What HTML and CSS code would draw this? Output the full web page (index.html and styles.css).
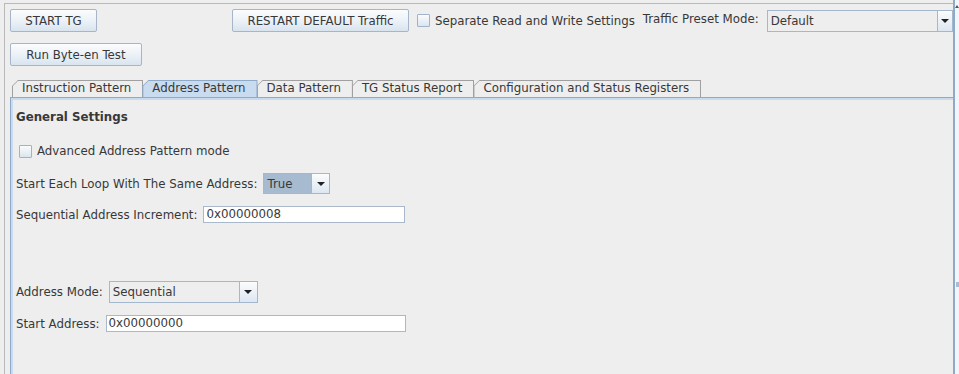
FILE: index.html
```html
<!DOCTYPE html>
<html lang="en">
<head>
  <meta charset="UTF-8">
  <meta name="viewport" content="width=device-width, initial-scale=1.0">
  <title>Traffic Generator</title>
  <link rel="stylesheet" href="styles.css">
</head>
<body>
  <div class="split">
    <div class="panel">
      <div class="row row-top">
        <button class="btn btn-start">START TG</button>
        <button class="btn btn-restart">RESTART DEFAULT Traffic</button>
        <label class="check check-top"><span class="box"></span>Separate Read and Write Settings</label>
        <span class="preset-label">Traffic Preset Mode:</span>
        <div class="combo combo-preset">
          <span class="combo-text">Default</span>
          <span class="combo-arrow"></span>
        </div>
      </div>

      <div class="row row-second">
        <button class="btn btn-byte">Run Byte-en Test</button>
      </div>

      <div class="tabs">
        <div class="tab"><span>Instruction Pattern</span></div>
        <div class="tab selected"><span>Address Pattern</span></div>
        <div class="tab"><span>Data Pattern</span></div>
        <div class="tab"><span>TG Status Report</span></div>
        <div class="tab"><span>Configuration and Status Registers</span></div>
      </div>

      <div class="tab-pane">
        <div class="section-title">General Settings</div>

        <label class="check check-adv"><span class="box"></span>Advanced Address Pattern mode</label>

        <div class="field-row row-loop">
          <span class="field-label">Start Each Loop With The Same Address:</span>
          <div class="combo combo-true">
            <span class="combo-text">True</span>
            <span class="combo-arrow"></span>
          </div>
        </div>

        <div class="field-row row-inc">
          <span class="field-label">Sequential Address Increment:</span>
          <div class="textfield tf-inc">0x00000008</div>
        </div>

        <div class="field-row row-mode">
          <span class="field-label">Address Mode:</span>
          <div class="combo combo-mode">
            <span class="combo-text">Sequential</span>
            <span class="combo-arrow"></span>
          </div>
        </div>

        <div class="field-row row-start">
          <span class="field-label">Start Address:</span>
          <div class="textfield tf-start">0x00000000</div>
        </div>
      </div>
    </div>

    <div class="divider">
      <span class="divider-up"></span>
      <span class="divider-grip"></span>
    </div>
  </div>
</body>
</html>
```

FILE: styles.css
```css
body {
  margin: 0;
  background: #eeeeee;
  font-family: "DejaVu Sans", sans-serif;
  font-size: 11.8px;
  color: #383838;
  overflow: hidden;
}

.split {
  display: flex;
  height: 374px;
}

.panel {
  width: 943px;
  flex-shrink: 0;
  margin: 3px 0 0 4px;
  padding: 5px 0 0 5px;
  border-top: 1px solid #b9b9b9;
  border-left: 1px solid #b9b9b9;
  display: flex;
  flex-direction: column;
}

.row {
  display: flex;
  align-items: center;
}

.row-second {
  margin-top: 11px;
}

/* buttons */
.btn {
  height: 23px;
  padding: 0;
  font-family: "DejaVu Sans", sans-serif;
  font-size: 11.8px;
  color: #383838;
  border: 1px solid #a7b6c6;
  border-radius: 2px;
  background: linear-gradient(#fbfcfd, #eef3f8 45%, #d9e4ef);
}

.btn-start {
  width: 87px;
}

.btn-restart {
  width: 177px;
  margin-left: 135px;
}

.btn-byte {
  width: 132px;
}

/* checkbox */
.check {
  display: flex;
  align-items: center;
  white-space: nowrap;
}

.box {
  width: 11px;
  height: 11px;
  margin-right: 5px;
  border: 1px solid #9fb3c9;
  border-radius: 1px;
  background: linear-gradient(#fafcfd, #dbe5ef);
}

.check-top {
  margin-left: 8px;
}

.preset-label {
  margin-left: 8px;
  align-self: flex-start;
  margin-top: 3px;
  white-space: nowrap;
}

/* combo boxes */
.combo {
  display: flex;
  border: 1px solid #a3b8cc;
  background: #eeeeee;
}

.combo-text {
  flex: 1;
  padding-left: 3px;
  display: flex;
  align-items: center;
}

.combo-arrow {
  width: 17px;
  border-left: 1px solid #a3b8cc;
  background: linear-gradient(#fbfcfd, #dde7f1);
  display: flex;
  align-items: center;
  justify-content: center;
}

.combo-arrow::after {
  content: "";
  border-left: 4px solid transparent;
  border-right: 4px solid transparent;
  border-top: 4px solid #222222;
}

.combo-preset {
  flex: 1;
  height: 20px;
  margin-left: 8px;
}

.combo-preset .combo-arrow {
  width: 14px;
}

.combo-true {
  width: 65px;
  height: 19px;
  background: #a6bbd0;
}

.combo-mode {
  width: 147px;
  height: 20px;
}

/* tabs */
.tabs {
  display: flex;
  margin-top: 14px;
  padding-left: 2px;
  height: 17px;
}

.tab {
  padding: 1px 1px 0 1px;
  margin-right: -1px;
  background: #a0a0a0;
  clip-path: polygon(0 6px, 6px 0, 100% 0, 100% 100%, 0 100%);
}

.tab span {
  display: block;
  height: 16px;
  line-height: 15px;
  padding: 0 11px 0 9px;
  background: #eeeeee;
  clip-path: polygon(0 5px, 5px 0, 100% 0, 100% 100%, 0 100%);
}

.tab.selected {
  background: #8fa9c9;
  position: relative;
  z-index: 1;
}

.tab.selected span {
  background: #c9dbee;
}

/* content of the selected tab */
.tab-pane {
  flex: 1;
  padding: 12px 0 0 5px;
  border-top: 1px solid #8fa9c9;
  border-left: 1px solid #8fa9c9;
  box-shadow: inset 2px 2px #c9dbee;
  display: flex;
  flex-direction: column;
  align-items: flex-start;
}

.section-title {
  font-weight: bold;
  line-height: 14px;
}

.check-adv {
  margin-top: 19px;
  height: 16px;
  margin-left: 3px;
}

.field-row {
  display: flex;
  align-items: center;
}

.field-label {
  margin-right: 6px;
  white-space: nowrap;
}

.row-loop {
  margin-top: 14px;
}

.row-inc {
  margin-top: 12px;
}

.row-mode {
  margin-top: 58px;
}

.row-start {
  margin-top: 12px;
}

.textfield {
  height: 15px;
  line-height: 15px;
  padding-left: 2px;
  border: 1px solid #a9b9ca;
  background: #ffffff;
}

.tf-inc {
  width: 198px;
}

.tf-start {
  width: 296px;
}

/* split pane divider on the right */
.divider {
  width: 4px;
  flex-shrink: 0;
  border-left: 2px solid #8fa9c9;
  background: #f2f5f9;
  display: flex;
  flex-direction: column;
  align-items: center;
}

.divider-up {
  margin-top: 5px;
  border-left: 2px solid transparent;
  border-right: 2px solid transparent;
  border-bottom: 3px solid #555555;
}

.divider-grip {
  margin-top: 274px;
  width: 3px;
  height: 5px;
  background: #a9bcd4;
}
```
